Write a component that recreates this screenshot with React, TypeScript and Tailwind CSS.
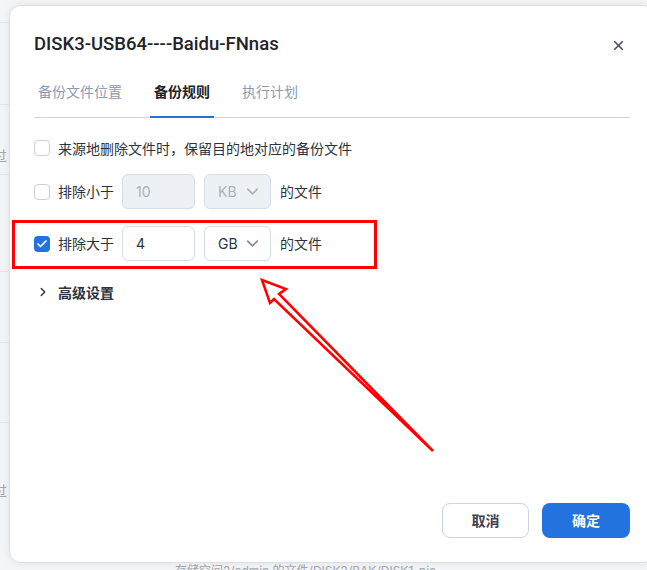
import React from "react";
import { ChevronDown, ChevronRight, X, Check } from "lucide-react";

const FONT = "font-['Inter','Noto_Sans_CJK_SC',sans-serif]";

// small checkbox box
const Box: React.FC<{ checked?: boolean }> = ({ checked }) =>
  checked ? (
    <span className="flex h-4 w-4 items-center justify-center rounded-[4px] bg-[#2272e0]">
      <Check size={12} strokeWidth={3.5} className="text-white" />
    </span>
  ) : (
    <span className="h-4 w-4 rounded-[4px] border border-[#c7d0dc] bg-white" />
  );

interface SizeRowProps {
  checked: boolean;
  label: string;
  value: string;
  unit: string;
}

const SizeRow: React.FC<SizeRowProps> = ({ checked, label, value, unit }) => {
  const off = !checked;
  return (
    <div className="flex h-[35px] items-center">
      <Box checked={checked} />
      <span className="ml-2 text-[14px] text-[#2b3340]">{label}</span>
      <div
        className={
          off
            ? "ml-2 flex h-[35px] w-[73px] items-center rounded-[6px] border border-[#d5dde8] bg-[#edf1f6] px-[13px] text-[14px] text-[#a6b1c0]"
            : "ml-2 flex h-[35px] w-[73px] items-center rounded-[6px] border border-[#d3dbe6] bg-white px-[13px] text-[14px] text-[#2b3340]"
        }
      >
        {value}
      </div>
      <div
        className={
          off
            ? "ml-[9px] flex h-[35px] w-[67px] items-center justify-between rounded-[6px] border border-[#d5dde8] bg-[#edf1f6] pl-[13px] pr-[8px] text-[14px] text-[#a6b1c0]"
            : "ml-[9px] flex h-[35px] w-[67px] items-center justify-between rounded-[6px] border border-[#d3dbe6] bg-white pl-[13px] pr-[8px] text-[14px] text-[#2b3340]"
        }
      >
        <span>{unit}</span>
        <ChevronDown size={19} strokeWidth={2.2} className={off ? "text-[#aab5c4]" : "text-[#7f8ba0]"} />
      </div>
      <span className="ml-[9px] text-[14px] text-[#2b3340]">的文件</span>
    </div>
  );
};

const tabs = ["备份文件位置", "备份规则", "执行计划"];

export default function App() {
  return (
    <div className={`relative h-[570px] w-[647px] overflow-hidden bg-[#f4f5f7] ${FONT}`}>
      {/* page behind the modal */}
      <div className="flex flex-col text-[14px] text-[#a0a6b0]">
        <div className="h-[23px] border-b border-[#e4e6ea]" />
        <div className="h-[82px] border-b border-[#e4e6ea]" />
        <div className="h-[70px] border-b border-[#e4e6ea] pt-[40px]">
          <span className="-ml-[7px]">过</span>
        </div>
        <div className="h-[97px] border-b border-[#e4e6ea]" />
        <div className="h-[71px] border-b border-[#e4e6ea]" />
        <div className="h-[80px] border-b border-[#e4e6ea]" />
        <div className="h-[60px] pt-[57px]">
          <span className="-ml-[7px]">过</span>
        </div>
        <div className="mt-[82px] pl-[175px] text-[12px] leading-none">存储空间2/admin 的文件/DISK2/BAK/DISK1-pic</div>
      </div>

      {/* modal */}
      <div className="absolute left-[9px] top-[5px] flex h-[558px] w-[646px] flex-col rounded-[12px] border border-[#dcdfe4] bg-white px-6 pb-6 shadow-[0_0_10px_rgba(0,0,0,0.08)]">
        <div className="mt-[27px] flex h-6 items-center justify-between">
          <h1 className="font-['Roboto','Noto_Sans_CJK_SC',sans-serif] text-[18.5px] font-medium text-[#1f2329]">
            DISK3-USB64----Baidu-FNnas
          </h1>
          <X size={15} strokeWidth={2.8} className="mr-[4px] text-[#4a5468]" />
        </div>

        <div className="mt-6 flex gap-6 border-b border-[#cdd6e2]">
          {tabs.map((t, i) => (
            <div
              key={t}
              className={
                i === 1
                  ? "-mb-px border-b-[2px] border-[#2272e0] px-1 pb-[13px] text-[14px] font-bold leading-[22px] text-[#1f2329]"
                  : "-mb-px border-b-[2px] border-transparent px-1 pb-[13px] text-[14px] leading-[22px] text-[#8b9bb3]"
              }
            >
              {t}
            </div>
          ))}
        </div>

        <div className="mt-[19px] flex h-[22px] items-center">
          <Box />
          <span className="ml-2 text-[14px] text-[#2b3340]">来源地删除文件时，保留目的地对应的备份文件</span>
        </div>

        <div className="mt-[15px]">
          <SizeRow checked={false} label="排除小于" value="10" unit="KB" />
        </div>
        <div className="mt-[17px]">
          <SizeRow checked label="排除大于" value="4" unit="GB" />
        </div>

        <div className="mt-5 flex h-[22px] items-center">
          <ChevronRight size={14} strokeWidth={2.4} className="ml-[2px] text-[#2b3340]" />
          <span className="ml-[8px] text-[14px] font-bold text-[#2b3340]">高级设置</span>
        </div>

        <div className="mt-auto flex justify-end gap-[13px]">
          <button className="h-[35px] w-[87px] rounded-[8px] border border-[#cdd5e0] bg-white text-[14px] font-bold text-[#3a4250]">
            取消
          </button>
          <button className="h-[35px] w-[88px] rounded-[8px] bg-[#2272e0] text-[14px] font-bold text-white">
            确定
          </button>
        </div>
      </div>

      {/* red annotation box */}
      <div className="absolute left-[12px] top-[220px] h-[49px] w-[365px] border-[3px] border-[#ff0000]" />

      {/* red annotation arrow */}
      <svg className="pointer-events-none absolute inset-0" width="647" height="570">
        <polygon
          points="262,280 286,289 279,294 433,451 274,299 270,303"
          fill="white"
          stroke="#ff0000"
          strokeWidth="2.5"
          strokeLinejoin="miter"
        />
      </svg>
    </div>
  );
}
